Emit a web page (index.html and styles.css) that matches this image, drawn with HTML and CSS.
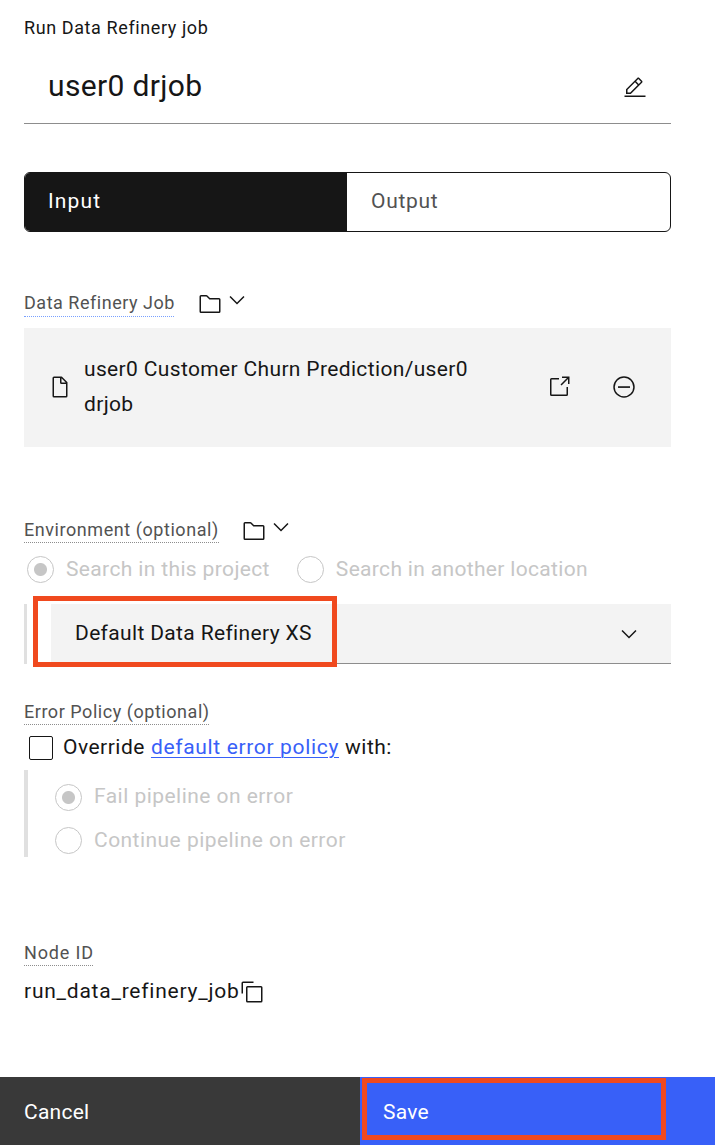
FILE: index.html
```html
<!DOCTYPE html>
<html lang="en">
<head>
<meta charset="utf-8">
<title>Run Data Refinery job</title>
<link rel="stylesheet" href="styles.css">
</head>
<body>
<svg class="sprite" aria-hidden="true">
  <symbol id="edit" viewBox="0 0 32 32"><path d="M2 26H30V28H2zM25.4 9c.8-.8.8-2 0-2.8l-3.6-3.6c-.8-.8-2-.8-2.8 0l-15 15V24h6.4L25.4 9zM20.4 4L24 7.6l-3 3L17.4 7 20.4 4zM6 22v-3.6l10-10 3.6 3.6-10 10H6z"/></symbol>
  <symbol id="folder" viewBox="0 0 32 32"><path d="M11.17 6l3.42 3.41.58.59H28v16H4V6h7.17m0-2H4a2 2 0 0 0-2 2v20a2 2 0 0 0 2 2h24a2 2 0 0 0 2-2V10a2 2 0 0 0-2-2H16l-3.41-3.41A2 2 0 0 0 11.17 4z"/></symbol>
  <symbol id="chevron" viewBox="0 0 16 16"><path d="M8 11L3 6 3.7 5.3 8 9.6 12.3 5.3 13 6z"/></symbol>
  <symbol id="document" viewBox="0 0 32 32"><path d="M25.7 9.3l-7-7A.9.9 0 0 0 18 2H8A2 2 0 0 0 6 4V28a2 2 0 0 0 2 2H24a2 2 0 0 0 2-2V10A.9.9 0 0 0 25.7 9.3ZM18 4.4L23.6 10H18ZM24 28H8V4h8v6a2 2 0 0 0 2 2h6Z"/></symbol>
  <symbol id="launch" viewBox="0 0 32 32"><path d="M26 28H6a2 2 0 0 1-2-2V6A2 2 0 0 1 6 4H16V6H6V26H26V16h2V26a2 2 0 0 1-2 2ZM20 2V4h6.59L18 12.59 19.41 14 28 5.41V12h2V2H20z"/></symbol>
  <symbol id="remove" viewBox="0 0 32 32"><circle cx="16" cy="16" r="13.3" fill="none" stroke="currentColor" stroke-width="2"/><path d="M8 15H24V17.2H8z"/></symbol>
  <symbol id="copy" viewBox="0 0 32 32"><path d="M28 10V28H10V10H28m0-2H10a2 2 0 0 0-2 2V28a2 2 0 0 0 2 2H28a2 2 0 0 0 2-2V10a2 2 0 0 0-2-2ZM4 18H2V4A2 2 0 0 1 4 2H18V4H4Z"/></symbol>
</svg>
<main class="panel">
  <header class="title"><span class="t-title">Run Data Refinery job</span></header>
  <div class="name-row">
    <span class="t-name">user0 drjob</span>
    <svg class="icon"><use href="#edit"/></svg>
  </div>
  <nav class="tabs">
    <div class="tab tab-active"><span class="t-input">Input</span></div>
    <div class="tab"><span class="t-output">Output</span></div>
  </nav>

  <section class="job">
    <div class="label-row label-row-job">
      <span class="label label-job">Data Refinery Job</span>
      <svg class="icon folder"><use href="#folder"/></svg>
      <svg class="icon chevron"><use href="#chevron"/></svg>
    </div>
    <div class="job-card">
      <svg class="icon"><use href="#document"/></svg>
      <div class="job-path">user0 Customer Churn Prediction/user0 drjob</div>
      <svg class="icon"><use href="#launch"/></svg>
      <svg class="icon remove"><use href="#remove"/></svg>
    </div>
  </section>

  <section class="environment">
    <div class="label-row">
      <span class="label label-env">Environment (optional)</span>
      <svg class="icon folder"><use href="#folder"/></svg>
      <svg class="icon chevron"><use href="#chevron"/></svg>
    </div>
    <div class="radios">
      <div class="choice"><i class="radio checked"></i><span class="t-this">Search in this project</span></div>
      <div class="choice"><i class="radio"></i><span class="t-another">Search in another location</span></div>
    </div>
    <div class="select-wrap">
      <div class="select"><span class="t-select">Default Data Refinery XS</span><svg class="icon"><use href="#chevron"/></svg></div>
      <div class="highlight highlight-select"></div>
    </div>
  </section>

  <section class="policy">
    <div class="label-row"><span class="label label-policy">Error Policy (optional)</span></div>
    <div class="override"><i class="checkbox"></i><span class="t-override">Override</span><a class="link">default error policy</a><span class="t-with">with:</span></div>
    <div class="policy-options">
      <div class="choice"><i class="radio checked"></i><span class="t-fail">Fail pipeline on error</span></div>
      <div class="choice"><i class="radio"></i><span class="t-continue">Continue pipeline on error</span></div>
    </div>
  </section>

  <section class="node">
    <div class="label-row"><span class="label label-node">Node ID</span></div>
    <div class="node-id"><span class="t-node">run_data_refinery_job</span><svg class="icon copy"><use href="#copy"/></svg></div>
  </section>
</main>
<footer class="actions">
  <div class="action cancel"><span class="t-cancel">Cancel</span></div>
  <div class="action save"><span class="t-save">Save</span><div class="highlight highlight-save"></div></div>
</footer>
</body>
</html>
```
FILE: styles.css
```css
* { box-sizing: border-box; }
body {
  margin: 0;
  width: 715px;
  height: 1145px;
  display: flex;
  flex-direction: column;
  background: #fff;
  color: #161616;
  font: 21px/28px Roboto, "Liberation Sans", sans-serif;
  letter-spacing: 0.5px;
  white-space: nowrap;
  overflow: hidden;
}
.sprite { display: none; }
.icon { width: 24px; height: 24px; flex: none; fill: currentColor; }
.panel { height: 1077px; flex: none; padding: 16px 44px 0 24px; }
.title { font-size: 18px; line-height: 24px; height: 24px; letter-spacing: 0.6px; }
.name-row {
  margin-top: 8px;
  height: 76px;
  padding: 0 24px;
  display: flex;
  align-items: center;
  justify-content: space-between;
  border-bottom: 1px solid #8d8d8d;
  font-size: 30px;
  line-height: 40px;
  letter-spacing: 0.35px;
}
.name-row .icon { margin-top: 4px; }
.tabs {
  margin-top: 48px;
  height: 60px;
  display: grid;
  grid-template-columns: 323px 1fr;
  border: 1px solid #161616;
  border-radius: 6px;
  overflow: hidden;
}
.tabs .tab { display: flex; align-items: center; padding: 0 23px 2px; color: #525252; letter-spacing: 0.7px; }
.tabs .tab-active { background: #161616; color: #fff; width: 322px; letter-spacing: 1.15px; }

.label-row { display: flex; height: 25px; }
.label {
  font-size: 18px;
  line-height: 24px;
  height: 25px;
  color: #525252;
  letter-spacing: 0.56px;
  border-bottom: 1px dotted #8d8d8d;
}
.folder { margin-left: 23px; margin-top: 1px; }
.chevron { margin-left: 3px; margin-top: -3px; }

.job { margin-top: 59px; }
.label-row-job { height: 26px; }
.label-job { border-color: #78a0ff; width: 150px; height: 26px; letter-spacing: 0.52px; }
.label-row-job .folder { margin-left: 24px; }
.job-card {
  margin-top: 11px;
  height: 119px;
  padding: 0 35px 2px 24px;
  display: flex;
  align-items: center;
  background: #f3f3f3;
}
.job-path { width: 420px; margin: 0 43px 0 12px; line-height: 35px; white-space: normal; letter-spacing: 0.35px; }
.remove { margin-left: 41px; }

.environment { margin-top: 71px; }
.label-env { width: 195px; }
.radios { display: flex; height: 27px; margin: 13px 0 0 3px; gap: 27px; }
.choice { display: flex; align-items: center; gap: 12px; height: 27px; color: #c6c6c6; }
.choice span { padding-bottom: 2px; }
.t-this { letter-spacing: 0.36px; }
.t-another { letter-spacing: 0.33px; }
.radio {
  width: 27px;
  height: 27px;
  flex: none;
  border: 1px solid #c6c6c6;
  border-radius: 50%;
}
.checked { background: radial-gradient(circle, #c6c6c6 6px, transparent 7px); }
.select-wrap {
  position: relative;
  margin-top: 21px;
  height: 60px;
  border-left: 3px solid #e0e0e0;
  padding-left: 24px;
}
.select {
  height: 60px;
  padding: 0 30px 0 24px;
  display: flex;
  align-items: center;
  justify-content: space-between;
  background: #f3f3f3;
  border-bottom: 1px solid #8d8d8d;
}
.t-select { letter-spacing: 0.35px; padding-bottom: 2px; }
.highlight { position: absolute; border: 5px solid #f0491e; }
.highlight-select { left: 6px; top: -8px; width: 304px; height: 71px; }

.policy { margin-top: 36px; }
.label-policy { width: 185px; letter-spacing: 0.54px; }
.override { display: flex; align-items: center; height: 24px; margin: 11px 0 0 5px; }
.override span, .override a { padding-bottom: 2px; }
.checkbox { width: 24px; height: 24px; margin-right: 10px; border: 1px solid #161616; border-radius: 2px; }
.link { margin: 0 6px; color: #3860f8; letter-spacing: 0.66px; text-decoration: underline; text-underline-offset: 3px; text-decoration-thickness: 1px; }
.policy-options {
  margin-top: 10px;
  height: 87px;
  border-left: 4px solid #e0e0e0;
  padding: 14px 0 0 27px;
  display: flex;
  flex-direction: column;
  gap: 16px;
}
.policy-options .t-fail { letter-spacing: 0.46px; padding-bottom: 3px; }
.t-continue { letter-spacing: 0.46px; }
.node { margin-top: 84px; }
.label-node { width: 69px; letter-spacing: 0.85px; }
.node-id { display: flex; align-items: center; height: 28px; margin-top: 12px; }
.t-node { letter-spacing: 0.76px; padding-bottom: 2px; }
.copy { margin-left: 1px; }

.actions { display: grid; grid-template-columns: 360px 1fr; height: 68px; flex: none; color: #fff; }
.action { position: relative; display: flex; align-items: center; padding: 2px 24px 0; letter-spacing: 0.25px; }
.cancel { background: #393939; }
.save { background: #3860f8; padding-left: 23px; }
.highlight-save { left: 2px; top: 1px; width: 304px; height: 62px; }
```
